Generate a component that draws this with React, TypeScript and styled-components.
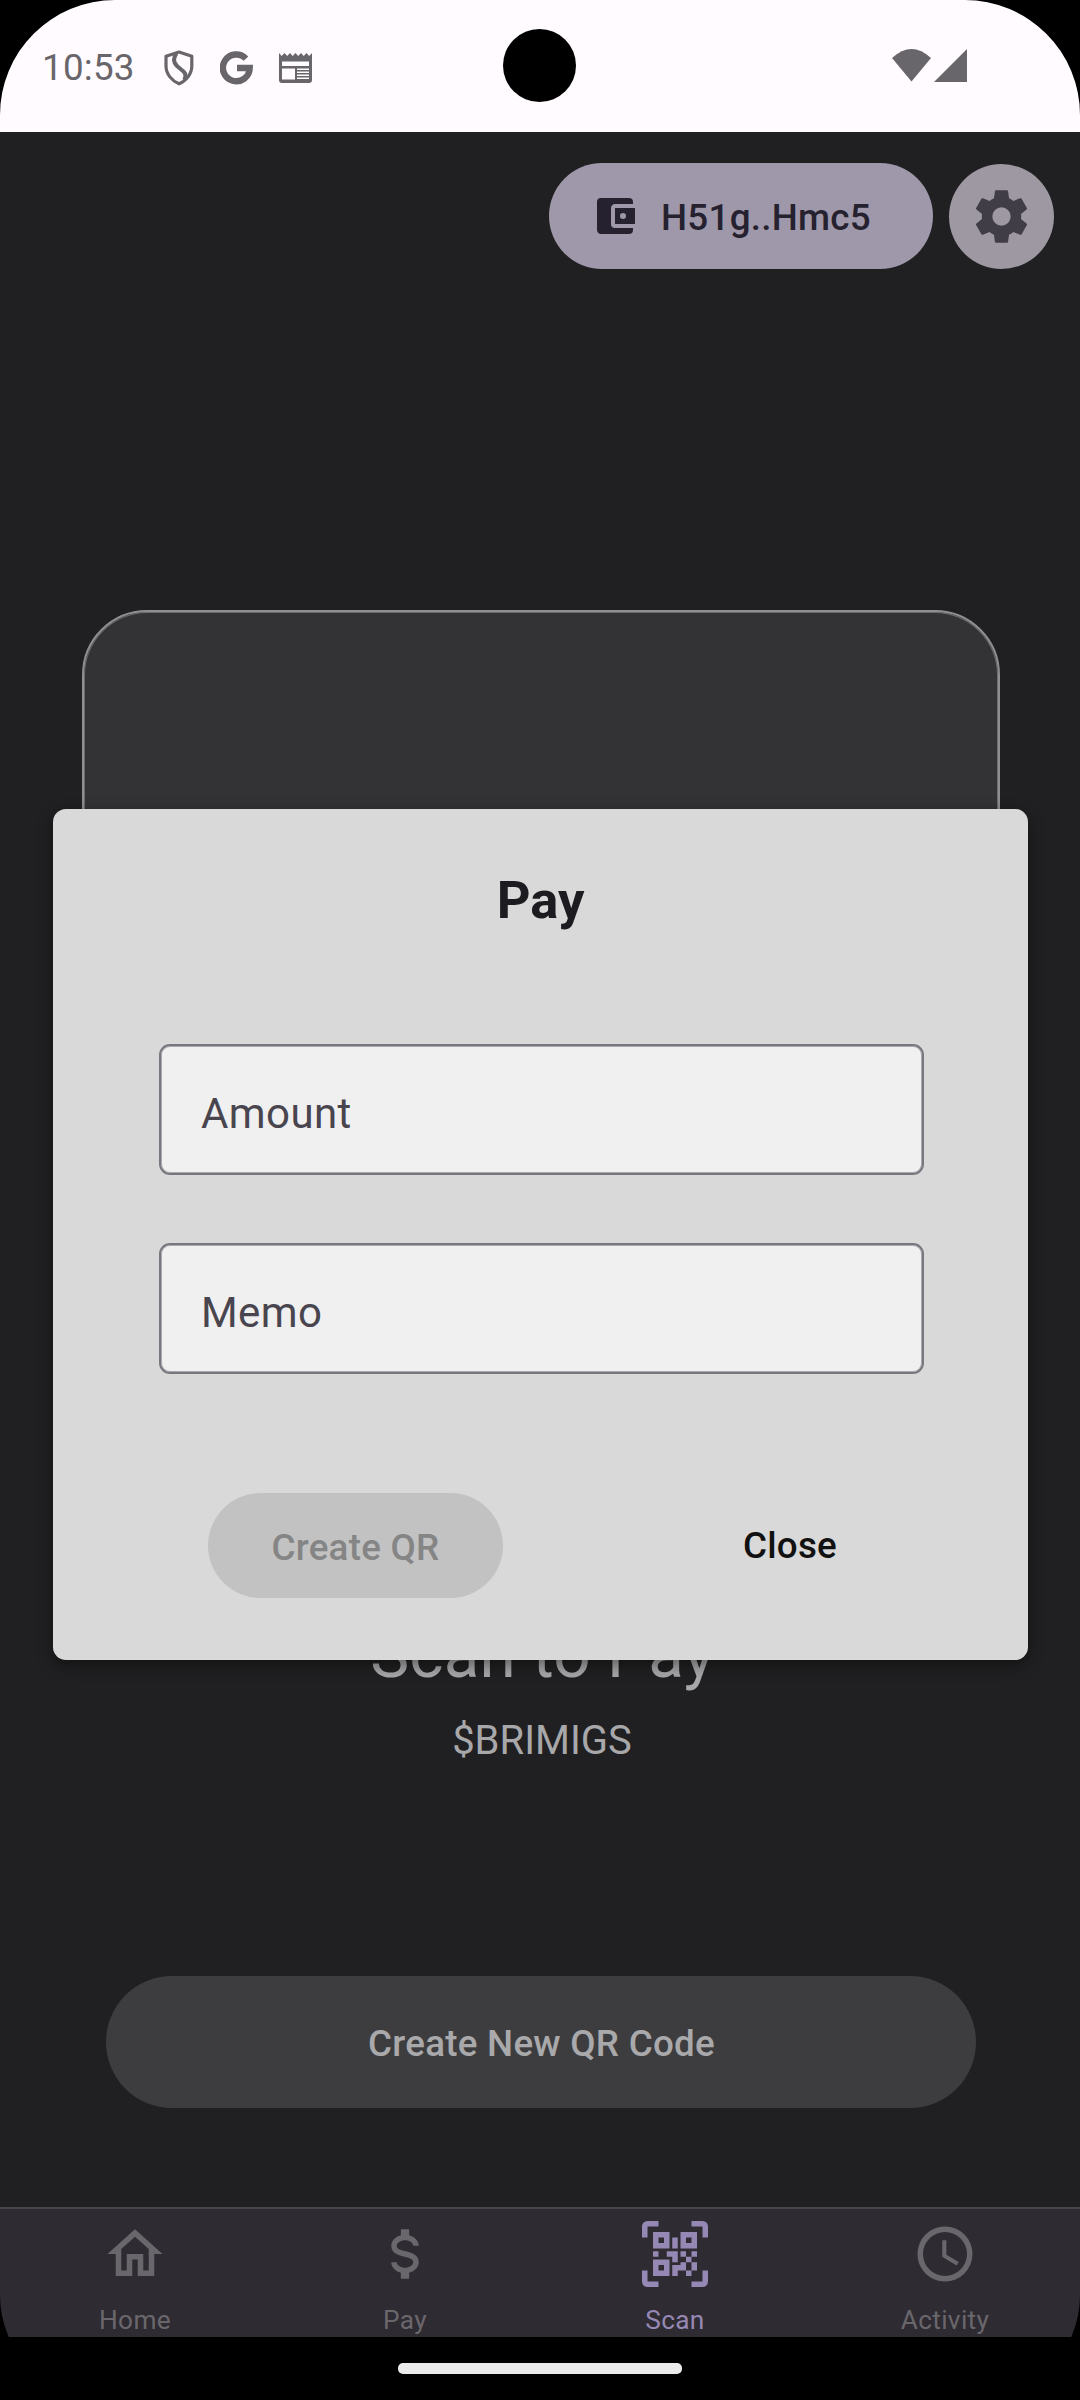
import React from "react";
import styled, { createGlobalStyle } from "styled-components";

const GlobalStyle = createGlobalStyle`
  * { box-sizing: border-box; }
  html, body { margin: 0; background: #000; }
  button { border: 0; margin: 0; padding: 0; font-family: inherit; }
`;

const Device = styled.div`
  position: relative;
  display: flex;
  flex-direction: column;
  width: 1080px;
  height: 2400px;
  overflow: hidden;
  border-radius: 115px 115px 105px 105px;
  background: #000;
  font-family: Roboto, "Liberation Sans", sans-serif;
`;

const StatusBar = styled.header`
  display: flex;
  align-items: center;
  justify-content: space-between;
  height: 132px;
  flex: none;
  padding: 3px 113px 0 42px;
  background: #fffbff;
  color: #69666b;
`;

const StatusGroup = styled.div<{ $gap: number }>`
  display: flex;
  align-items: center;
  gap: ${(p) => p.$gap}px;
`;

const SignalGroup = styled(StatusGroup)`
  padding-bottom: 4px;
`;

const Clock = styled.span`
  width: 95.5px;
  padding-top: 1px;
  font-size: 36.75px;
  line-height: 44px;
  letter-spacing: 0.25px;
  white-space: nowrap;
`;

const Camera = styled.div`
  position: absolute;
  left: 503px;
  top: 29px;
  width: 73px;
  height: 73px;
  border-radius: 50%;
  background: #000;
`;

const Screen = styled.main`
  display: flex;
  flex-direction: column;
  align-items: center;
  height: 2075px;
  flex: none;
  background: #202022;
`;

const TopActions = styled.div`
  display: flex;
  align-self: flex-end;
  align-items: center;
  gap: 16px;
  margin: 31px 26px 0 0;
`;

const WalletButton = styled.button`
  display: flex;
  align-items: center;
  gap: 22px;
  width: 384px;
  height: 106px;
  padding-left: 42px;
  border-radius: 53px;
  background: #9f98aa;
  color: #25212f;
  font-size: 36.75px;
  font-weight: 500;
  letter-spacing: 0.26px;
`;

const WalletLabel = styled.span`
  padding-top: 2px;
`;

const SettingsButton = styled.button`
  display: flex;
  align-items: center;
  justify-content: center;
  width: 105px;
  height: 105px;
  border-radius: 50%;
  background: #9d98a1;
  color: #403d47;
`;

const Preview = styled.div`
  width: 918px;
  height: 918px;
  flex: none;
  margin: 341px 0 0 2px;
  border: 2px solid #8f8f90;
  border-radius: 65px;
  background: #333335;
  box-shadow: inset 0 0 0 1px #6c6c6e;
`;

const ScanTitle = styled.h1`
  margin: 79px 0 0 5px;
  color: #a8a8aa;
  font-size: 65.625px;
  font-weight: 400;
  line-height: 96px;
  letter-spacing: 0.1px;
`;

const Handle = styled.p`
  margin: 12px 0 0 4px;
  color: #a8a8aa;
  font-size: 40px;
  line-height: 52px;
`;

const CreateButton = styled.button`
  width: 870px;
  height: 132px;
  margin: 209px 0 0 2px;
  padding: 2px 0 0 1px;
  border-radius: 66px;
  background: #3d3d3f;
  color: #a9a9ab;
  font-size: 36.75px;
  font-weight: 500;
  letter-spacing: 0.26px;
`;

const TabBar = styled.nav`
  display: grid;
  grid-template-columns: repeat(4, 1fr);
  height: 130px;
  flex: none;
  border-top: 2px solid #48454e;
  background: #2f2b32;
`;

const Tab = styled.div<{ $active?: boolean }>`
  display: flex;
  flex-direction: column;
  align-items: center;
  padding-top: 12px;
  gap: 17px;
  color: ${(p) => (p.$active ? "#9688b4" : "#6a676c")};
  font-size: 26.25px;
  line-height: 32px;
  letter-spacing: 0.3px;
`;

const GestureArea = styled.footer`
  display: flex;
  justify-content: center;
  height: 63px;
  flex: none;
  padding-top: 26px;
  background: #000;
`;

const GestureHandle = styled.div`
  width: 284px;
  height: 11px;
  border-radius: 5px;
  background: #ebebeb;
`;

const Dialog = styled.section`
  position: absolute;
  left: 53px;
  top: 809px;
  display: flex;
  flex-direction: column;
  width: 975px;
  height: 851px;
  padding: 0 104px 0 106px;
  border-radius: 13px;
  background: #d9d9d9;
  box-shadow: 0 5px 16px rgba(0, 0, 0, 0.45);
`;

const DialogTitle = styled.h2`
  margin: 60px 2px 81px 0;
  color: #1c1b20;
  font-size: 52.5px;
  font-weight: 700;
  line-height: 62px;
  height: 62px;
  text-align: center;
`;

const Fields = styled.div`
  display: flex;
  flex-direction: column;
  gap: 68px;
  margin-top: 32px;
`;

const Field = styled.div`
  display: flex;
  align-items: center;
  height: 131px;
  padding: 8px 0 0 40px;
  border: 2px solid #7a7680;
  border-radius: 11px;
  background: #f0f0f0;
  box-shadow: inset 0 0 0 1px #aba8ae;
  color: #49454f;
  font-size: 42px;
  letter-spacing: 0.4px;
`;

const DialogActions = styled.div`
  display: flex;
  align-items: center;
  justify-content: space-between;
  margin: 119px 87px 0 49px;
`;

const CreateQrButton = styled.button`
  width: 295px;
  height: 105px;
  padding-top: 4px;
  border-radius: 53px;
  background: #c2c2c2;
  color: #858586;
  font-size: 36.75px;
  font-weight: 500;
  letter-spacing: 0.26px;
`;

const CloseButton = styled.button`
  height: 105px;
  background: transparent;
  color: #111;
  font-size: 36.75px;
  font-weight: 500;
  letter-spacing: 0.26px;
`;

const Glyph = styled.svg`
  display: block;
  flex: none;
  fill: currentColor;
`;

function Icon({ d, size }: { d: string; size: number }) {
  return (
    <Glyph width={size} height={size} viewBox="0 0 24 24">
      <path d={d} fillRule="evenodd" />
    </Glyph>
  );
}

const WALLET =
  "M21 18V19A2 2 0 0 1 19 21H5C3.89 21 3 20.1 3 19V5A2 2 0 0 1 5 3H19A2 2 0 0 1 21 5V6H12C10.89 6 10 6.9 10 8V16A2 2 0 0 0 12 18ZM12 16H22V8H12ZM16 13.5A1.5 1.5 0 0 1 14.5 12A1.5 1.5 0 0 1 16 10.5A1.5 1.5 0 0 1 17.5 12A1.5 1.5 0 0 1 16 13.5Z";
const COG =
  "M12,15.5A3.5,3.5 0 0,1 8.5,12A3.5,3.5 0 0,1 12,8.5A3.5,3.5 0 0,1 15.5,12A3.5,3.5 0 0,1 12,15.5M19.43,12.97C19.47,12.65 19.5,12.33 19.5,12C19.5,11.67 19.47,11.34 19.43,11L21.54,9.37C21.73,9.22 21.78,8.95 21.66,8.73L19.66,5.27C19.54,5.05 19.27,4.96 19.05,5.05L16.56,6.05C16.04,5.66 15.5,5.32 14.87,5.07L14.5,2.42C14.46,2.18 14.25,2 14,2H10C9.75,2 9.54,2.18 9.5,2.42L9.13,5.07C8.5,5.32 7.96,5.66 7.44,6.05L4.95,5.05C4.73,4.96 4.46,5.05 4.34,5.27L2.34,8.73C2.21,8.95 2.27,9.22 2.46,9.37L4.57,11C4.53,11.34 4.5,11.67 4.5,12C4.5,12.33 4.53,12.65 4.57,12.97L2.46,14.63C2.27,14.78 2.21,15.05 2.34,15.27L4.34,18.73C4.46,18.95 4.73,19.03 4.95,18.95L7.44,17.94C7.96,18.34 8.5,18.68 9.13,18.93L9.5,21.58C9.54,21.82 9.75,22 10,22H14C14.25,22 14.46,21.82 14.5,21.58L14.87,18.93C15.5,18.67 16.04,18.34 16.56,17.94L19.05,18.95C19.27,19.03 19.54,18.95 19.66,18.73L21.66,15.27C21.78,15.05 21.73,14.78 21.54,14.63L19.43,12.97Z";
const HOME =
  "M12 5.69L17 10.19V18H15V12H9V18H7V10.19L12 5.69M12 3L2 12H5V20H11V14H13V20H19V12H22";
const DOLLAR =
  "M7,15H9C9,16.08 10.37,17 12,17C13.63,17 15,16.08 15,15C15,13.9 13.96,13.5 11.76,12.97C9.64,12.44 7,11.78 7,9C7,7.21 8.47,5.69 10.5,5.18V3H13.5V5.18C15.53,5.69 17,7.21 17,9H15C15,7.92 13.63,7 12,7C10.37,7 9,7.92 9,9C9,10.1 10.04,10.5 12.24,11.03C14.36,11.56 17,12.22 17,15C17,16.79 15.53,18.31 13.5,18.82V21H10.5V18.82C8.47,18.31 7,16.79 7,15Z";
const QR_SCAN =
  "M4,4H10V10H4V4M20,4V10H14V4H20M14,15H16V13H14V11H16V13H18V11H20V13H18V15H20V18H18V20H16V18H13V20H11V16H14V15M16,15V18H18V15H16M4,20V14H10V20H4M6,6V8H8V6H6M16,6V8H18V6H16M6,16V18H8V16H6M4,11H6V13H4V11M9,11H13V15H11V13H9V11M11,6H13V10H11V6M2,2V6H0V2A2,2 0 0,1 2,0H6V2H2M22,0A2,2 0 0,1 24,2V6H22V2H18V0H22M2,18V22H6V24H2A2,2 0 0,1 0,22V18H2M22,22V18H24V22A2,2 0 0,1 22,24H18V22H22Z";
const CLOCK =
  "M12,20A8,8 0 0,0 20,12A8,8 0 0,0 12,4A8,8 0 0,0 4,12A8,8 0 0,0 12,20M12,2A10,10 0 0,1 22,12A10,10 0 0,1 12,22C6.47,22 2,17.5 2,12A10,10 0 0,1 12,2M12.5,7V12.25L17,14.92L16.25,16.15L11,13V7H12.5Z";

const tabs = [
  { label: "Home", icon: HOME },
  { label: "Pay", icon: DOLLAR },
  { label: "Scan", icon: QR_SCAN, active: true },
  { label: "Activity", icon: CLOCK },
];

function ShieldIcon() {
  return (
    <Glyph width="30" height="36" viewBox="0 0 30 36">
      <g fill="none" stroke="currentColor" strokeWidth="3.2" strokeLinejoin="round">
        <path d="M15 2L27.800 6.300V16C27.800 24 22 31 15 33.800C8 31 2 24 2 16V6.300Z" />
        <path d="M12.500 3.500C9 8 9 12 13 16L19.500 21.500C22 24 22 27 20 30" strokeWidth="4" />
      </g>
    </Glyph>
  );
}

function GoogleIcon() {
  return (
    <Glyph width="33" height="34" viewBox="0 0 33 34">
      <path
        d="M26 7.600A13.400 13.400 0 1 0 29.700 17H17"
        fill="none"
        stroke="currentColor"
        strokeWidth="6.4"
      />
    </Glyph>
  );
}

function NewsIcon() {
  return (
    <Glyph width="33" height="30" viewBox="0 0 33 30">
      <path
        fillRule="evenodd"
        d="M0 0L2.700 3L5.500 0L8.200 3L11 0L13.700 3L16.500 0L19.200 3L22 0L24.700 3L27.500 0L30.200 3L33 0V27Q33 30 30 30H3Q0 30 0 27ZM3 8.500V13H30V8.500ZM3 15.500V26.500H16V15.500ZM18 15.500V17H30V15.500ZM18 18.500V20H30V18.500ZM18 21.500V23H30V21.500ZM18 24.500V26H30V24.500Z"
      />
    </Glyph>
  );
}

export default function App() {
  return (
    <>
      <GlobalStyle />
      <Device>
        <StatusBar>
          <StatusGroup $gap={26}>
            <Clock>10:53</Clock>
            <ShieldIcon />
            <GoogleIcon />
            <NewsIcon />
          </StatusGroup>
          <SignalGroup $gap={0}>
            <Glyph width="75" height="33" viewBox="0 0 75 33">
              <path d="M0 9Q19.500 -9 39 9L19.500 32.500Z" />
              <path d="M42 33L75 0V33Z" />
            </Glyph>
          </SignalGroup>
        </StatusBar>
        <Camera />

        <Screen>
          <TopActions>
            <WalletButton>
              <Icon d={WALLET} size={48} />
              <WalletLabel>H51g..Hmc5</WalletLabel>
            </WalletButton>
            <SettingsButton aria-label="Settings">
              <Icon d={COG} size={63} />
            </SettingsButton>
          </TopActions>
          <Preview />
          <ScanTitle>Scan to Pay</ScanTitle>
          <Handle>$BRIMIGS</Handle>
          <CreateButton>Create New QR Code</CreateButton>
        </Screen>

        <TabBar>
          {tabs.map((tab) => (
            <Tab key={tab.label} $active={tab.active}>
              <Icon d={tab.icon} size={66} />
              <span>{tab.label}</span>
            </Tab>
          ))}
        </TabBar>
        <GestureArea>
          <GestureHandle />
        </GestureArea>

        <Dialog role="dialog">
          <DialogTitle>Pay</DialogTitle>
          <Fields>
            <Field>Amount</Field>
            <Field>Memo</Field>
          </Fields>
          <DialogActions>
            <CreateQrButton disabled>Create QR</CreateQrButton>
            <CloseButton>Close</CloseButton>
          </DialogActions>
        </Dialog>
      </Device>
    </>
  );
}
